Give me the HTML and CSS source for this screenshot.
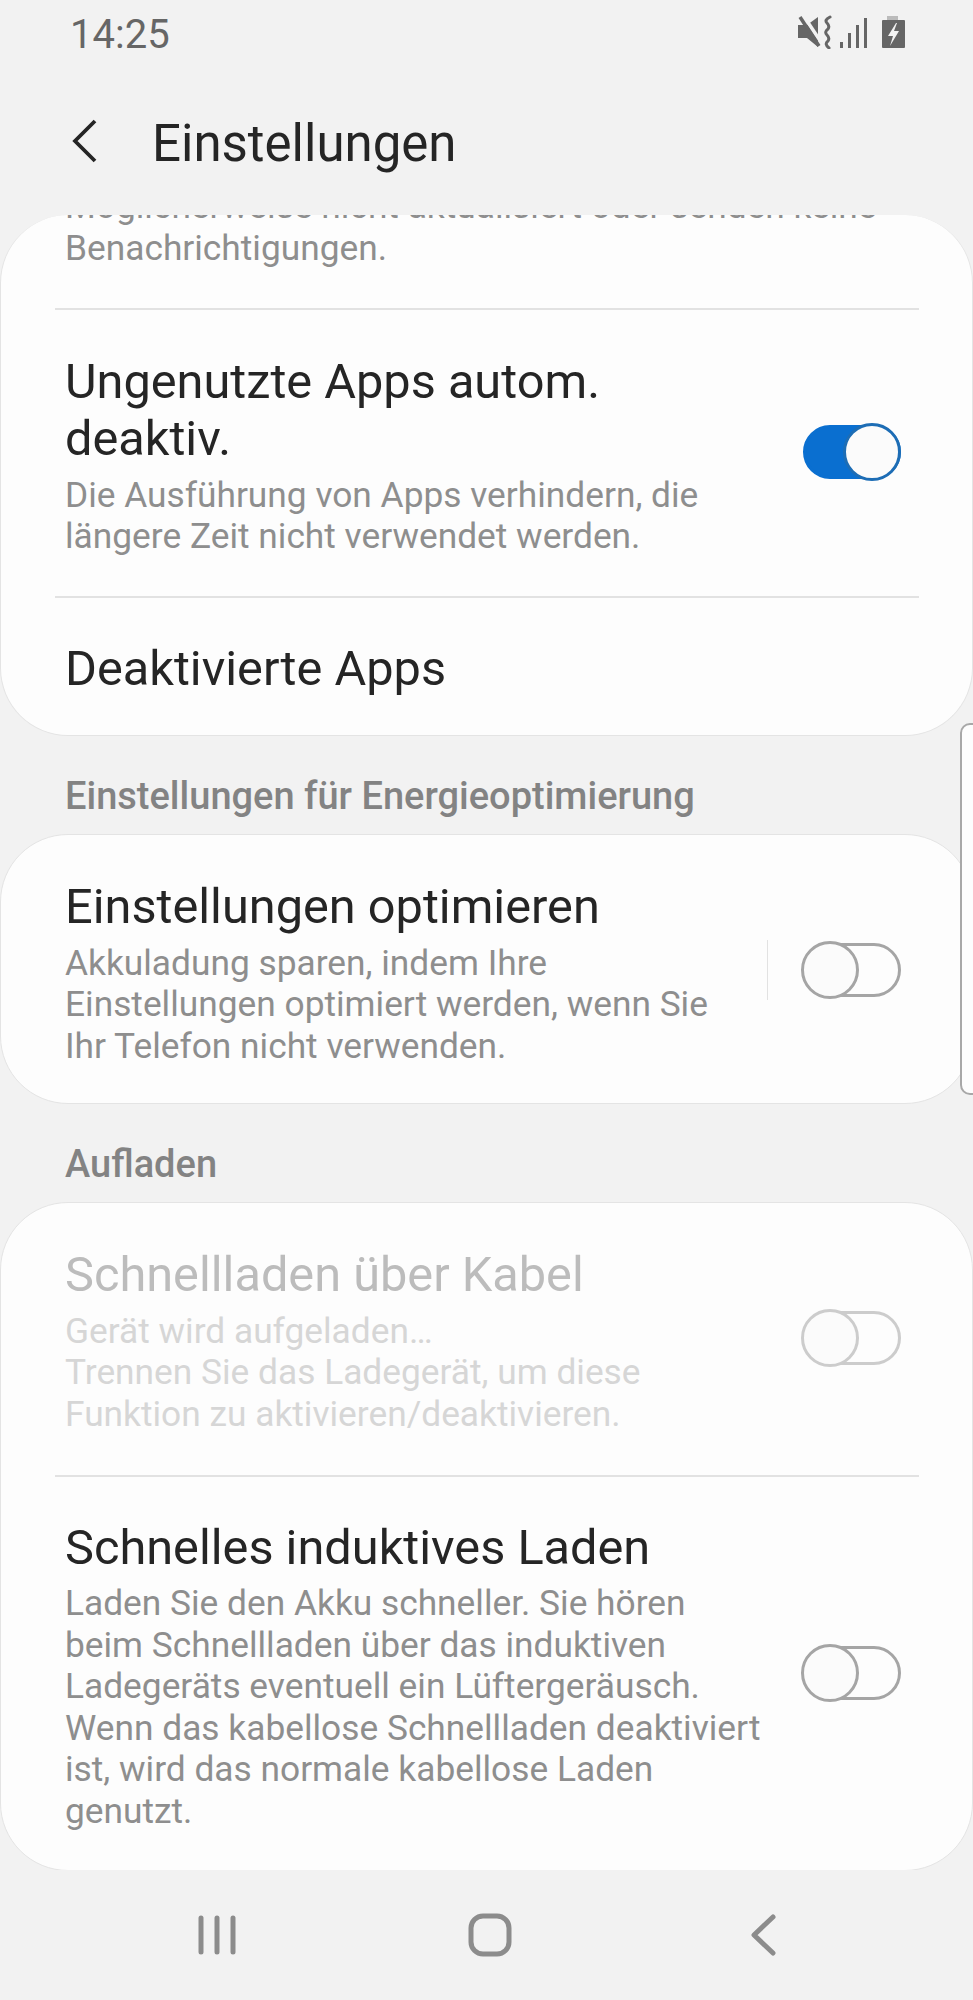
FILE: index.html
```html
<!DOCTYPE html>
<html lang="de">
<head>
<meta charset="UTF-8" />
<title>Einstellungen</title>
<link rel="stylesheet" href="styles.css">
</head>
<body>

<!-- STATUS BAR -->
<div class="status-bar">
  <span class="time">14:25</span>
  <svg class="status-icons" width="108" height="34" viewBox="0 0 108 34" aria-hidden="true">
    <path d="M1 10h9l11-8v30L10 23H1z" fill="#666"/>
    <path d="M6 0l18 27" stroke="#f2f2f2" stroke-width="3.5"/>
    <path d="M3 2l19 29" stroke="#666" stroke-width="3.5"/>
    <path d="M33 2q-6 3-3 6t1 6q-4 3-1 6t1 6q-4 3 1 7" fill="none" stroke="#666" stroke-width="3" stroke-linecap="round"/>
    <g fill="#666">
      <rect x="43" y="27" width="3" height="6"/>
      <rect x="51" y="18" width="3" height="15"/>
      <rect x="59" y="10" width="3" height="23"/>
      <rect x="67" y="3" width="3" height="30"/>
    </g>
    <rect x="90" y="1" width="11" height="5" fill="#bbb"/>
    <rect x="85" y="5" width="23" height="28" rx="1" fill="#666"/>
    <path d="M99 8l-8 13h5l-3 10 9-15h-5l3-8z" fill="#f2f2f2"/>
  </svg>
</div>

<!-- TOP BAR -->
<header class="top-bar">
  <svg class="back-icon" width="26" height="44" viewBox="0 0 26 44" aria-hidden="true">
    <path d="M23 2L3 22l20 20" fill="none" stroke="#252525" stroke-width="3.8"/>
  </svg>
  <h1>Einstellungen</h1>
</header>

<main class="content">
  <section class="card card-first">
    <div class="row row-cut">
      <div class="row-text">
        <p class="sub">Möglicherweise nicht aktualisiert oder senden keine Benachrichtigungen.</p>
      </div>
    </div>
    <div class="divider"></div>
    <div class="row">
      <div class="row-text">
        <p class="title">Ungenutzte Apps autom. deaktiv.</p>
        <p class="sub">Die Ausführung von Apps verhindern, die längere Zeit nicht verwendet werden.</p>
      </div>
      <span class="toggle on"><span class="thumb"></span></span>
    </div>
    <div class="divider"></div>
    <div class="row row-single">
      <div class="row-text">
        <p class="title">Deaktivierte Apps</p>
      </div>
    </div>
  </section>

  <h2 class="group-label">Einstellungen für Energieoptimierung</h2>
  <section class="card">
    <div class="row row-sep">
      <div class="row-text with-sep">
        <p class="title">Einstellungen optimieren</p>
        <p class="sub">Akkuladung sparen, indem Ihre Einstellungen optimiert werden, wenn Sie Ihr Telefon nicht verwenden.</p>
      </div>
      <span class="vsep"></span>
      <span class="toggle"><span class="thumb"></span></span>
    </div>
  </section>

  <h2 class="group-label">Aufladen</h2>
  <section class="card">
    <div class="row disabled">
      <div class="row-text">
        <p class="title">Schnellladen über Kabel</p>
        <p class="sub">Gerät wird aufgeladen…<br>Trennen Sie das Ladegerät, um diese Funktion zu aktivieren/deaktivieren.</p>
      </div>
      <span class="toggle"><span class="thumb"></span></span>
    </div>
    <div class="divider"></div>
    <div class="row row-tall">
      <div class="row-text">
        <p class="title">Schnelles induktives Laden</p>
        <p class="sub">Laden Sie den Akku schneller. Sie hören beim Schnellladen über das induktiven Ladegeräts eventuell ein Lüftergeräusch. Wenn das kabellose Schnellladen deaktiviert ist, wird das normale kabellose Laden genutzt.</p>
      </div>
      <span class="toggle"><span class="thumb"></span></span>
    </div>
  </section>
</main>

<!-- Scroll handle over the right edge -->
<div class="scroll-handle"></div>

<!-- NAV BAR -->
<nav class="nav-bar">
  <svg width="38" height="40" viewBox="0 0 38 40" aria-hidden="true">
    <g stroke="#8c8c8c" stroke-width="5" stroke-linecap="round">
      <path d="M3 3v34"/><path d="M19 3v34"/><path d="M35 3v34"/>
    </g>
  </svg>
  <svg width="44" height="44" viewBox="0 0 44 44" aria-hidden="true">
    <rect x="3" y="3" width="38" height="38" rx="12" fill="none" stroke="#8c8c8c" stroke-width="5"/>
  </svg>
  <svg width="26" height="42" viewBox="0 0 26 42" aria-hidden="true">
    <path d="M23 3L4 21l19 18" fill="none" stroke="#8c8c8c" stroke-width="5" stroke-linecap="round" stroke-linejoin="round"/>
  </svg>
</nav>

</body>
</html>
```

FILE: styles.css
```css
/* Reset and base */
* {
  box-sizing: border-box;
}
html, body {
  margin: 0;
  padding: 0;
}
body {
  position: relative;
  width: 973px;
  height: 2000px;
  overflow: hidden;
  background: #f2f2f2;
  font-family: Roboto, "Liberation Sans", sans-serif;
  display: flex;
  flex-direction: column;
}
p, h1, h2 {
  margin: 0;
  font-weight: 400;
}

/* Status bar */
.status-bar {
  height: 66px;
  padding: 2px 68px 0 70px;
  display: flex;
  justify-content: space-between;
  align-items: center;
}
.time {
  font-size: 40px;
  color: #666;
}
.status-icons {
  display: block;
  margin-top: -4px;
}

/* Top bar */
.top-bar {
  height: 149px;
  padding: 0 0 0 72px;
  display: flex;
  align-items: center;
}
.top-bar h1 {
  margin: 6px 0 0 54px;
  font-size: 51px;
  color: #252525;
}
.back-icon {
  display: block;
}

/* Cards */
.content {
  display: flex;
  flex-direction: column;
}
.card {
  background: #fdfdfd;
  border: 1px solid #e4e4e4;
  border-radius: 68px;
  overflow: hidden;
}
.card-first {
  border-top: none;
}
.row {
  display: flex;
  align-items: center;
  padding: 43px 71px 38px 64px;
}
.row-cut {
  padding-top: 0;
  padding-bottom: 39px;
}
.row-cut .row-text {
  width: auto;
  flex: 1;
  margin: -29px 0 0;
}
.row-single {
  padding-top: 42px;
  padding-bottom: 38px;
}
.row-sep {
  padding-bottom: 36px;
}
.row.disabled {
  padding-bottom: 40px;
}
.row-tall {
  padding-top: 42px;
}
.row-text {
  width: 701px;
  margin-right: 30px;
}
.row-text.with-sep {
  width: 680px;
  margin-right: 22px;
}
.title {
  font-size: 48.7px;
  line-height: 57.4px;
  color: #252525;
}
.sub {
  margin-top: 7px;
  font-size: 35.3px;
  line-height: 41.5px;
  color: #8e8e8e;
}
.row-cut .sub {
  margin-top: 0;
}
.disabled .title {
  color: #bcbcbc;
}
.disabled .sub {
  color: #d6d6d6;
}
.disabled .toggle {
  opacity: 0.55;
}
.divider {
  height: 2px;
  margin: 0 53px 0 54px;
  background: #e2e2e2;
}
.vsep {
  flex: none;
  width: 1px;
  height: 60px;
  margin-top: -5px;
  background: #e2e2e2;
}

/* Toggle */
.toggle {
  position: relative;
  flex: none;
  margin-left: auto;
  margin-top: -6px;
  width: 98px;
  height: 54px;
  border: 3px solid #a5a5a5;
  border-radius: 27px;
}
.row-tall .toggle {
  margin-top: -5px;
}
.thumb {
  position: absolute;
  top: -5px;
  left: -5px;
  width: 58px;
  height: 58px;
  background: #fbfbfb;
  border: 3px solid #a5a5a5;
  border-radius: 50%;
}
.toggle.on {
  background: #0a6fd0;
  border-color: #0a6fd0;
}
.toggle.on .thumb {
  left: auto;
  right: -3px;
  border-color: #1d6db5;
}

/* Section labels */
.group-label {
  height: 98px;
  padding: 40px 0 0 65px;
  font-size: 38px;
  line-height: 40px;
  font-weight: 500;
  color: #838383;
}

/* Scroll handle */
.scroll-handle {
  position: absolute;
  top: 723px;
  right: -12px;
  width: 25px;
  height: 372px;
  background: #fdfdfd;
  border: 2px solid #a8a8a8;
  border-radius: 10px;
}

/* Nav bar */
.nav-bar {
  position: absolute;
  left: 0;
  right: 0;
  bottom: 0;
  height: 130px;
  background: #f2f2f2;
}
.nav-bar svg {
  position: absolute;
  top: 43px;
}
.nav-bar svg:nth-child(1) { left: 198px; top: 45px; }
.nav-bar svg:nth-child(2) { left: 468px; }
.nav-bar svg:nth-child(3) { left: 750px; top: 44px; }
```
